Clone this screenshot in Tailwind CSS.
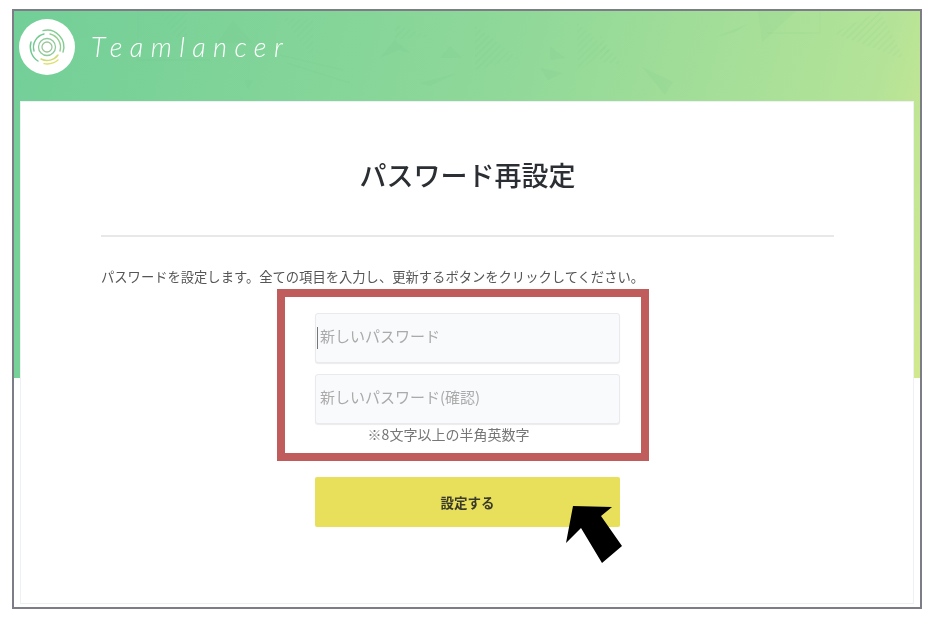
<!DOCTYPE html>
<html lang="ja">
<head>
  <meta charset="UTF-8">
  <meta name="viewport" content="width=device-width, initial-scale=1.0">
  <script src="https://cdn.jsdelivr.net/npm/@tailwindcss/browser@4"></script>
  <title>パスワード再設定</title>
</head>
<body class="bg-white w-[934px] h-[626px] overflow-hidden font-['Noto_Sans_CJK_JP','Noto_Sans',sans-serif]">
<div class="relative blur-[0.5px] ml-[12px] mt-[9px] w-[910px] h-[600px] border-2 border-[#7d7d88] bg-white">

  <!-- Green header background -->
  <div class="absolute inset-x-0 top-0 h-[367px] bg-[linear-gradient(105deg,#72cf98_0%,#8fd899_50%,#b4e398_88%,#d2e98e_100%)] overflow-hidden">
    <svg class="w-full h-full" viewBox="14 11 906 367" fill="none">
      <defs>
        <pattern id="hatch" width="5" height="5" patternUnits="userSpaceOnUse" patternTransform="rotate(45)">
          <rect width="2" height="5" fill="#5fb87f" fill-opacity="0.08"/>
        </pattern>
      </defs>
      <g fill="#5fb87f" fill-opacity="0.07">
        <polygon points="758,10 797,10 762,42"/>
        <polygon points="642,67 673,82 665,95"/>
        <polygon points="715,37 748,24 735,32"/>
        <polygon points="233,20 253,43 217,43"/>
        <polygon points="245,80 253,80 248,90"/>
        <polygon points="440,58 462,58 450,46"/>
        <polygon points="550,46 565,58 550,60"/>
        <polygon points="420,83 457,73 430,86"/>
        <polygon points="540,68 563,73 548,80"/>
        <polygon points="380,58 395,40 410,53 398,50"/>
      </g>
      <g fill="url(#hatch)">
        <polygon points="475,25 518,58 475,70"/>
        <polygon points="577,23 610,51 578,70"/>
        <polygon points="283,18 313,20 313,58"/>
        <polygon points="160,15 187,12 187,52"/>
        <polygon points="395,24 430,36 395,40"/>
        <polygon points="833,33 880,11 905,60"/>
        <polygon points="600,35 622,65 600,62"/>
      </g>
      <g stroke="#5fb87f" stroke-opacity="0.07" stroke-width="1.2">
        <path d="M767 33H820V11"/>
        <path d="M138 11V60H210"/>
        <path d="M280 55L343 70M287 63L350 83"/>
      </g>
    </svg>
  </div>

  <!-- Logo -->
  <div class="relative flex items-center h-[90px] pl-[5px] pb-[19px]">
    <div class="flex items-center justify-center w-[56px] h-[56px] rounded-full bg-white">
      <svg width="44" height="44" viewBox="-22 -22 44 44" fill="none" stroke-linecap="round">
        <circle r="5" stroke="#9cc79a" stroke-width="1.3"/>
        <circle r="8.5" stroke="#8ecb9a" stroke-width="1.3"/>
        <path d="M-13 4A13.6 13.6 0 0 1 -3 -13" stroke="#71c991" stroke-width="1.4"/>
        <path d="M3 -13A13.6 13.6 0 0 1 13 4" stroke="#92cf8f" stroke-width="1.4"/>
        <path d="M11 8A13.6 13.6 0 0 1 -6 12" stroke="#cfdc74" stroke-width="1.4"/>
        <path d="M-16 -5A16.8 16.8 0 0 0 -9 14" stroke="#71c991" stroke-width="1.4"/>
        <path d="M-4 -16.4A16.8 16.8 0 0 1 16 5" stroke="#84cd92" stroke-width="1.4"/>
        <path d="M11 13A16.8 16.8 0 0 1 -3 16.6" stroke="#dce06a" stroke-width="1.4"/>
      </svg>
    </div>
    <span class="ml-[16px] font-['Lato',sans-serif] font-light italic text-[27px] leading-none tracking-[7.4px] text-white">Teamlancer</span>
  </div>

  <!-- Card -->
  <div class="relative mx-[6px] w-[894px] h-[503px] bg-white border border-[#eef0f4] pt-[55px] pl-[80px] pr-[79px]">
    <h1 class="h-[36px] text-center text-[27px] leading-[36px] font-medium text-[#2b2f33]">パスワード再設定</h1>
    <div class="mt-[42px] h-[2px] bg-[#e8e8e8]"></div>
    <p class="mt-[30px] h-[20px] text-[13.3px] leading-[20px] text-[#555]">パスワードを設定します。全ての項目を入力し、更新するボタンをクリックしてください。</p>

    <div class="flex flex-col w-[305px] ml-[214px] mt-[26px]">
      <div class="relative">
        <input class="block w-full h-[50px] pl-[4px] pb-[5px] rounded-[3px] border border-[#e9e9ee] bg-[#f9fafc] text-[15px] shadow-[0_1px_1px_rgba(0,0,0,0.08)] placeholder:text-[#aaa]" placeholder="新しいパスワード">
        <div class="absolute left-[2px] top-[14px] w-px h-[22px] bg-[#777]"></div>
      </div>
      <input class="block mt-[11px] w-full h-[50px] pl-[4px] pb-[5px] rounded-[3px] border border-[#e9e9ee] bg-[#f9fafc] text-[15px] shadow-[0_1px_1px_rgba(0,0,0,0.08)] placeholder:text-[#aaa]" placeholder="新しいパスワード(確認)">
      <p class="h-[20px] pr-[38px] text-center text-[14px] leading-[20px] text-[#777]">※8文字以上の半角英数字</p>
      <button class="mt-[33px] h-[50px] rounded-[2px] bg-[#e8e05a] text-[13.5px] font-bold text-[#3a3a2a]">設定する</button>
    </div>
  </div>

  <!-- Red annotation box -->
  <div class="absolute left-[263px] top-[278px] w-[372px] h-[172px] border-[8px] border-[#c05c5c]"></div>

  <!-- Arrow annotation -->
  <svg class="absolute left-[536px] top-[484px]" width="90" height="70" viewBox="550 495 90 70">
    <polygon points="573,506 612,507 601,516 622,546 602,563 581,528 566,543" fill="#000"/>
  </svg>
</div>
</body>
</html>
